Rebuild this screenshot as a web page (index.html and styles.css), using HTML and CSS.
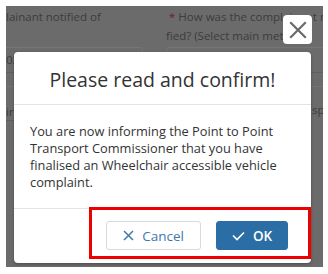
FILE: index.html
```html
<!DOCTYPE html>
<html>
<head>
<meta charset="utf-8">
<link rel="stylesheet" href="styles.css">
</head>
<body>
<div class="frame">
  <div class="page">
    <div class="row row-top">
      <div class="col col-left">
        <div class="label">lainant notified of</div>
        <div class="input input-left">02</div>
      </div>
      <div class="col col-right">
        <div class="label"><span class="req">*</span> How was the complainant noti-<br>fied? (Select main method)</div>
        <div class="input"></div>
      </div>
    </div>
    <div class="row row-mid">
      <div class="col col-left"><div class="label2">ir</div></div>
      <div class="col col-right"><div class="label2 right-label">spe</div></div>
    </div>
  </div>

  <button class="close" aria-label="Close">
    <svg width="18" height="18" viewBox="0 0 18 18"><path d="M2 2 L16 16 M16 2 L2 16" stroke="#6a6a6a" stroke-width="2.2" stroke-linecap="square" fill="none"/></svg>
  </button>

  <div class="modal">
    <div class="modal-header">Please read and confirm!</div>
    <div class="modal-body">You are now informing the Point to Point Transport Commissioner that you have finalised an Wheelchair accessible vehicle complaint.</div>
    <div class="modal-footer">
      <button class="btn btn-cancel">
        <svg width="11" height="11" viewBox="0 0 11 11"><path d="M1 1 L10 10 M10 1 L1 10" stroke="#3f78ad" stroke-width="1.5" fill="none"/></svg>
        <span>Cancel</span>
      </button>
      <button class="btn btn-ok">
        <svg width="13" height="10" viewBox="0 0 13 10"><path d="M1 4.5 L5 8.5 L12 1.5" stroke="#ffffff" stroke-width="1.6" fill="none"/></svg>
        <span>OK</span>
      </button>
    </div>
  </div>

  <div class="highlight"></div>
</div>
</body>
</html>
```

FILE: styles.css
```css
html, body {
  margin: 0;
  padding: 0;
  background: #ffffff;
}
body {
  width: 328px;
  height: 274px;
  overflow: hidden;
  font-family: "Open Sans", "Liberation Sans", sans-serif;
}
.frame {
  position: relative;
  margin: 6px 0 0 6px;
  width: 317px;
  height: 261px;
  background: #6b6b6b;
  overflow: hidden;
}
.page {
  color: #3c3c3c;
  font-size: 11.5px;
}
.row {
  display: grid;
  grid-template-columns: 137px 1fr;
  column-gap: 23px;
}
.row-top {
  border-bottom: 1px solid #5f5f5f;
  padding-top: 1px;
  height: 67px;
  box-sizing: border-box;
}
.label {
  line-height: 19px;
  height: 39px;
  white-space: nowrap;
}
.req {
  color: #6a1f1f;
  padding-left: 3px;
}
.input {
  height: 40px;
  border: 1px solid #757575;
  border-radius: 3px;
  box-sizing: border-box;
  margin-top: 1px;
}
.input-left {
  border-left: none;
  border-radius: 0 3px 3px 0;
  padding: 5px 0 0 0;
  line-height: 14px;
}
.row-mid {
  height: 47px;
  align-items: start;
}
.label2 {
  padding-top: 31px;
  line-height: 16px;
}
.col-left .label2 {
  border-bottom: 1px solid #5f5f5f;
}
.right-label {
  padding-left: 146px;
  padding-top: 29px;
}
.close {
  position: absolute;
  top: 9px;
  right: 11px;
  width: 29px;
  height: 29px;
  border: none;
  border-radius: 4px;
  background: #ffffff;
  padding: 0;
  display: flex;
  align-items: center;
  justify-content: center;
}
.modal {
  position: absolute;
  left: 8px;
  top: 46px;
  width: 297px;
  height: 211px;
  background: #ffffff;
  border-radius: 4px;
  box-shadow: 0 1px 3px rgba(0,0,0,0.3);
  display: flex;
  flex-direction: column;
}
.modal-header {
  height: 53px;
  border-bottom: 1px solid #e3e3e3;
  display: flex;
  align-items: center;
  justify-content: center;
  font-size: 19.5px;
  color: #333333;
  padding-top: 3px;
  box-sizing: border-box;
}
.modal-body {
  height: 104px;
  box-sizing: border-box;
  padding: 18px 18px 0 16px;
  font-size: 12.8px;
  line-height: 17px;
  color: #333333;
  border-bottom: 1px solid #e3e3e3;
}
.modal-footer {
  flex: 1;
  display: flex;
  justify-content: flex-end;
  align-items: flex-start;
  gap: 15px;
  padding: 12px 23px 0 0;
}
.btn {
  height: 29px;
  border-radius: 3px;
  font-family: "Open Sans", "Liberation Sans", sans-serif;
  font-size: 13.5px;
  display: flex;
  align-items: center;
  justify-content: center;
  gap: 8px;
  padding: 0;
  box-sizing: border-box;
}
.btn-cancel {
  width: 95px;
  background: #ffffff;
  border: 1px solid #d9d9d9;
  color: #3f78ad;
}
.btn-ok {
  width: 72px;
  background: #2b6ea6;
  border: 1px solid #2b6ea6;
  color: #ffffff;
  font-weight: 600;
}
.highlight {
  position: absolute;
  left: 83px;
  top: 201px;
  width: 222px;
  height: 52px;
  border: 3px solid #ee0000;
  box-sizing: border-box;
}
```
